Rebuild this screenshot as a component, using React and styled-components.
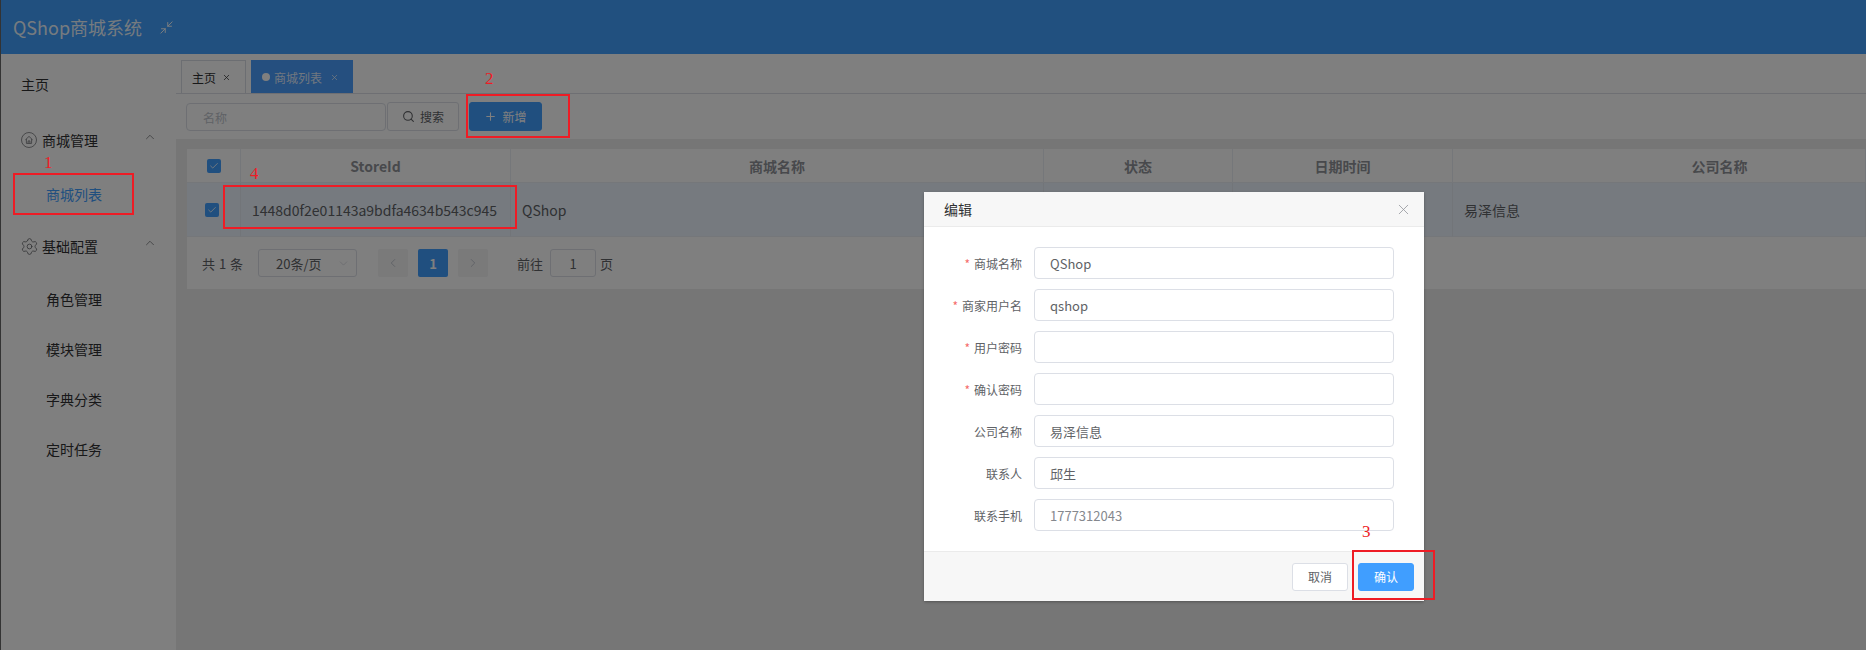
import React from 'react';
import styled, { createGlobalStyle } from 'styled-components';
import { ChevronDown, ChevronLeft, ChevronRight, ChevronUp, Minimize2, Plus, Search, Settings, X, Check } from 'lucide-react';

const GlobalStyle = createGlobalStyle`
  html, body {
    margin: 0;
    height: 100%;
    overflow: hidden;
    background: #333;
  }
  * { box-sizing: border-box; }
  body {
    font-family: "Noto Sans CJK SC", "Open Sans", sans-serif;
    color: #303133;
  }
`;

const Shell = styled.div`
  position: relative;
  margin-left: 1px;
  height: 650px;
  display: flex;
  flex-direction: column;
  background: #ececec;
  overflow: hidden;
`;

const Header = styled.header`
  height: 54px;
  flex: none;
  background: #42a1ff;
  display: flex;
  align-items: center;
  padding-left: 12px;
  color: rgba(255, 255, 255, 0.92);
`;

const Title = styled.div`
  font-size: 18px;
  width: 146px;
`;

const Body = styled.div`
  flex: 1;
  display: flex;
  min-height: 0;
`;

const Sidebar = styled.nav`
  width: 175px;
  flex: none;
  background: #fff;
  padding-top: 5px;
`;

const NavRow = styled.div`
  height: 50px;
  display: flex;
  align-items: center;
  gap: 5px;
  font-size: 14px;
  padding-left: ${p => (p.$sub ? 45 : 20)}px;
  margin-top: ${p => p.$top || 0}px;
  color: ${p => (p.$active ? '#409eff' : '#303133')};
`;

const Caret = styled.span`
  margin-left: auto;
  margin-right: 19px;
  margin-top: -6px;
  display: flex;
  color: #606266;
`;

const GearIcon = styled(Settings)`
  margin: 0 -1.5px;
  color: #606266;
`;

const Main = styled.main`
  flex: 1;
  min-width: 0;
  display: flex;
  flex-direction: column;
`;

const TopPanel = styled.div`
  background: #fff;
  height: 85px;
  flex: none;
`;

const TabStrip = styled.div`
  height: 40px;
  padding: 6px 0 0 5px;
  display: flex;
  gap: 5px;
  border-bottom: 1px solid #dcdfe6;
`;

const Tab = styled.div`
  height: 33px;
  padding: 0 ${p => (p.$active ? 13 : 14)}px 0 10px;
  display: flex;
  align-items: center;
  gap: 4px;
  font-size: 12px;
  border: 1px solid ${p => (p.$active ? '#4a9eff' : '#d8dce5')};
  border-bottom: 0;
  background: ${p => (p.$active ? '#4a9eff' : '#fff')};
  color: ${p => (p.$active ? 'rgba(255, 255, 255, 0.85)' : '#303133')};
`;

const TabClose = styled(X)`
  margin-left: ${p => p.$left}px;
`;

const Dot = styled.i`
  width: 8px;
  height: 8px;
  border-radius: 50%;
  background: #fff;
`;

const Toolbar = styled.div`
  display: flex;
  align-items: flex-start;
  padding: 8px 0 0 10px;
`;

const SearchField = styled.div`
  width: 200px;
  height: 28px;
  margin-top: 1px;
  border: 1px solid #dcdfe6;
  border-radius: 4px;
  padding-left: 16px;
  display: flex;
  align-items: center;
  font-size: 12px;
  color: #c0c4cc;
`;

const ToolButton = styled.button`
  height: 29px;
  width: ${p => p.$w}px;
  margin-left: ${p => p.$left}px;
  border-radius: 3px;
  border: 1px solid ${p => (p.$primary ? '#409eff' : '#dcdfe6')};
  background: ${p => (p.$primary ? '#409eff' : '#fff')};
  color: ${p => (p.$primary ? '#fff' : '#606266')};
  font: inherit;
  font-size: 12px;
  display: flex;
  align-items: center;
  justify-content: center;
  gap: 5px;
  padding: 0;
`;

const Card = styled.section`
  margin: 10px 0 0 11px;
  height: 140px;
  flex: none;
  background: #fff;
`;

const Grid = styled.div`
  display: grid;
  grid-template-columns: 54px 270px 533px 189px 220px 1fr;
  height: ${p => p.$h}px;
  background: ${p => p.$bg || '#fff'};
`;

// the last column runs on past the right edge, so its title sits right of the visible middle
const HeadCell = styled.div`
  display: flex;
  align-items: center;
  justify-content: center;
  padding-left: ${p => p.$shift || 0}px;
  font-size: 14px;
  font-weight: 700;
  color: #909399;
  border-right: 1px solid #ebeef5;
  border-bottom: 1px solid #ebeef5;
`;

const Cell = styled.div`
  display: flex;
  align-items: center;
  justify-content: ${p => (p.$center ? 'center' : 'flex-start')};
  padding: ${p => (p.$center ? '0 3px 0 0' : '0 11px')};
  font-size: 14px;
  color: #606266;
  border-right: 1px solid #e4eaf3;
  border-bottom: 1px solid #ebeef5;
`;

const CheckBox = styled.span`
  width: 14px;
  height: 14px;
  border-radius: 2px;
  background: #409eff;
  display: flex;
  align-items: center;
  justify-content: center;
  color: #fff;
`;

const Pager = styled.div`
  height: 52px;
  display: flex;
  align-items: center;
  padding-left: 15px;
  font-size: 13px;
  color: #606266;
`;

const PagerText = styled.span`
  margin-left: ${p => p.$left || 0}px;
  word-spacing: ${p => p.$spread || 0}px;
`;

const PageSize = styled.div`
  width: 99px;
  height: 28px;
  margin-left: 15px;
  border: 1px solid #dcdfe6;
  border-radius: 3px;
  padding: 0 6px 0 17px;
  display: flex;
  align-items: center;
  justify-content: space-between;
  color: #606266;
`;

const PageBtn = styled.div`
  width: 30px;
  height: 28px;
  margin-left: ${p => p.$left}px;
  border-radius: 2px;
  display: flex;
  align-items: center;
  justify-content: center;
  font-weight: 700;
  background: ${p => (p.$active ? '#409eff' : '#f4f4f5')};
  color: ${p => (p.$active ? '#fff' : '#c0c4cc')};
`;

const JumpInput = styled.div`
  width: 46px;
  height: 28px;
  margin: 0 4px 0 7px;
  border: 1px solid #dcdfe6;
  border-radius: 3px;
  display: flex;
  align-items: center;
  justify-content: center;
`;

// the dialog was centred in a wider window than this crop, hence the left padding
const Mask = styled.div`
  position: absolute;
  inset: 0;
  background: rgba(0, 0, 0, 0.5);
  display: flex;
  align-items: flex-start;
  padding: 192px 0 0 923px;
`;

const Dialog = styled.div`
  width: 500px;
  height: 409px;
  background: #fff;
  border-radius: 2px;
  box-shadow: 0 1px 3px rgba(0, 0, 0, 0.3);
  display: flex;
  flex-direction: column;
`;

const DialogHead = styled.div`
  height: 35px;
  flex: none;
  background: #f7f7f7;
  border-bottom: 1px solid #ebebeb;
  display: flex;
  align-items: center;
  justify-content: space-between;
  padding: 0 12px 0 20px;
  font-size: 14px;
  color: #303133;
`;

const Form = styled.div`
  flex: 1;
  padding-top: 20px;
  display: flex;
  flex-direction: column;
  gap: 10px;
`;

const FormRow = styled.div`
  display: flex;
  align-items: center;
  height: 32px;
`;

const Label = styled.label`
  width: 98px;
  text-align: right;
  font-size: 12px;
  color: #606266;
  flex: none;
`;

const Star = styled.span`
  color: #f56c6c;
  margin-right: 4px;
`;

const Field = styled.div`
  width: 360px;
  height: 32px;
  margin-left: 12px;
  border: 1px solid #dcdfe6;
  border-radius: 4px;
  padding-left: 15px;
  display: flex;
  align-items: center;
  font-size: 13px;
  color: ${p => (p.$light ? '#85888e' : '#606266')};
`;

const DialogFoot = styled.div`
  height: 50px;
  flex: none;
  background: #f7f7f7;
  border-top: 1px solid #ebebeb;
  display: flex;
  align-items: center;
  justify-content: flex-end;
  gap: 10px;
  padding-right: 10px;
`;

const FootButton = styled.button`
  width: 56px;
  height: 28px;
  padding: 0;
  border-radius: 3px;
  border: 1px solid ${p => (p.$primary ? '#409eff' : '#dcdfe6')};
  background: ${p => (p.$primary ? '#409eff' : '#fff')};
  color: ${p => (p.$primary ? '#fff' : '#606266')};
  font: inherit;
  font-size: 12px;
`;

const MarkBox = styled.div`
  position: absolute;
  left: ${p => p.$x}px;
  top: ${p => p.$y}px;
  width: ${p => p.$w}px;
  height: ${p => p.$h}px;
  border: 2px solid #ee1c25;
`;

const MarkNum = styled.span`
  position: absolute;
  left: ${p => p.$x}px;
  top: ${p => p.$y}px;
  font-family: "Liberation Serif", serif;
  font-size: 17px;
  line-height: 18px;
  color: #ee1c25;
`;

const HomeIcon = () => (
  <svg width="16" height="16" viewBox="0 0 16 16" fill="none" stroke="#606266" strokeWidth="0.7">
    <circle cx="8" cy="8" r="7.5" />
    <path d="M4.4 7.8 8 4.4l3.6 3.4M5.4 7v4.4h5.2V7M7.1 11.4V8.9h1.8v2.5" />
  </svg>
);

const fields = [
  { label: '商城名称', value: 'QShop', required: true },
  { label: '商家用户名', value: 'qshop', required: true },
  { label: '用户密码', value: '', required: true },
  { label: '确认密码', value: '', required: true },
  { label: '公司名称', value: '易泽信息' },
  { label: '联系人', value: '邱生' },
  { label: '联系手机', value: '1777312043', light: true },
];

const columns = ['StoreId', '商城名称', '状态', '日期时间'];

export default function App() {
  return (
    <>
      <GlobalStyle />
      <Shell>
        <Header>
          <Title>QShop商城系统</Title>
          <Minimize2 size={15} strokeWidth={1.6} />
        </Header>
        <Body>
          <Sidebar>
            <NavRow>主页</NavRow>
            <NavRow $top={6}>
              <HomeIcon />
              商城管理
              <Caret><ChevronUp size={14} strokeWidth={1.2} /></Caret>
            </NavRow>
            <NavRow $sub $active $top={4}>商城列表</NavRow>
            <NavRow $top={2}>
              <GearIcon size={19} strokeWidth={1} />
              基础配置
              <Caret><ChevronUp size={14} strokeWidth={1.2} /></Caret>
            </NavRow>
            <NavRow $sub $top={3}>角色管理</NavRow>
            <NavRow $sub>模块管理</NavRow>
            <NavRow $sub>字典分类</NavRow>
            <NavRow $sub>定时任务</NavRow>
          </Sidebar>
          <Main>
            <TopPanel>
              <TabStrip>
                <Tab>主页<TabClose size={9} $left={2} /></Tab>
                <Tab $active><Dot />商城列表<TabClose size={9} $left={4} /></Tab>
              </TabStrip>
              <Toolbar>
                <SearchField>名称</SearchField>
                <ToolButton $w={72} $left={1}><Search size={13} />搜索</ToolButton>
                <ToolButton $primary $w={73} $left={10}><Plus size={13} />新增</ToolButton>
              </Toolbar>
            </TopPanel>
            <Card>
              <Grid $h={34}>
                <HeadCell><CheckBox><Check size={10} strokeWidth={2} /></CheckBox></HeadCell>
                {columns.map(c => <HeadCell key={c}>{c}</HeadCell>)}
                <HeadCell $shift={121}>公司名称</HeadCell>
              </Grid>
              <Grid $h={54} $bg="#ecf5ff">
                <Cell $center><CheckBox><Check size={10} strokeWidth={2} /></CheckBox></Cell>
                <Cell>1448d0f2e01143a9bdfa4634b543c945</Cell>
                <Cell>QShop</Cell>
                <Cell />
                <Cell />
                <Cell>易泽信息</Cell>
              </Grid>
              <Pager>
                <PagerText $spread={1}>共 1 条</PagerText>
                <PageSize>20条/页<ChevronDown size={13} strokeWidth={1} color="#c0c4cc" /></PageSize>
                <PageBtn $left={21}><ChevronLeft size={14} strokeWidth={1.6} /></PageBtn>
                <PageBtn $left={10} $active>1</PageBtn>
                <PageBtn $left={10}><ChevronRight size={14} strokeWidth={1.6} /></PageBtn>
                <PagerText $left={29}>前往</PagerText>
                <JumpInput>1</JumpInput>
                <span>页</span>
              </Pager>
            </Card>
          </Main>
        </Body>
        <Mask>
          <Dialog>
            <DialogHead>
              编辑
              <X size={17} strokeWidth={1.1} color="#909399" />
            </DialogHead>
            <Form>
              {fields.map(f => (
                <FormRow key={f.label}>
                  <Label>{f.required && <Star>*</Star>}{f.label}</Label>
                  <Field $light={f.light}>{f.value}</Field>
                </FormRow>
              ))}
            </Form>
            <DialogFoot>
              <FootButton>取消</FootButton>
              <FootButton $primary>确认</FootButton>
            </DialogFoot>
          </Dialog>
        </Mask>
        <MarkBox $x={12} $y={173} $w={121} $h={42} />
        <MarkNum $x={43} $y={154}>1</MarkNum>
        <MarkBox $x={465} $y={94} $w={104} $h={44} />
        <MarkNum $x={484} $y={70}>2</MarkNum>
        <MarkBox $x={1351} $y={550} $w={83} $h={50} />
        <MarkNum $x={1361} $y={523}>3</MarkNum>
        <MarkBox $x={222} $y={185} $w={294} $h={44} />
        <MarkNum $x={249} $y={165}>4</MarkNum>
      </Shell>
    </>
  );
}
